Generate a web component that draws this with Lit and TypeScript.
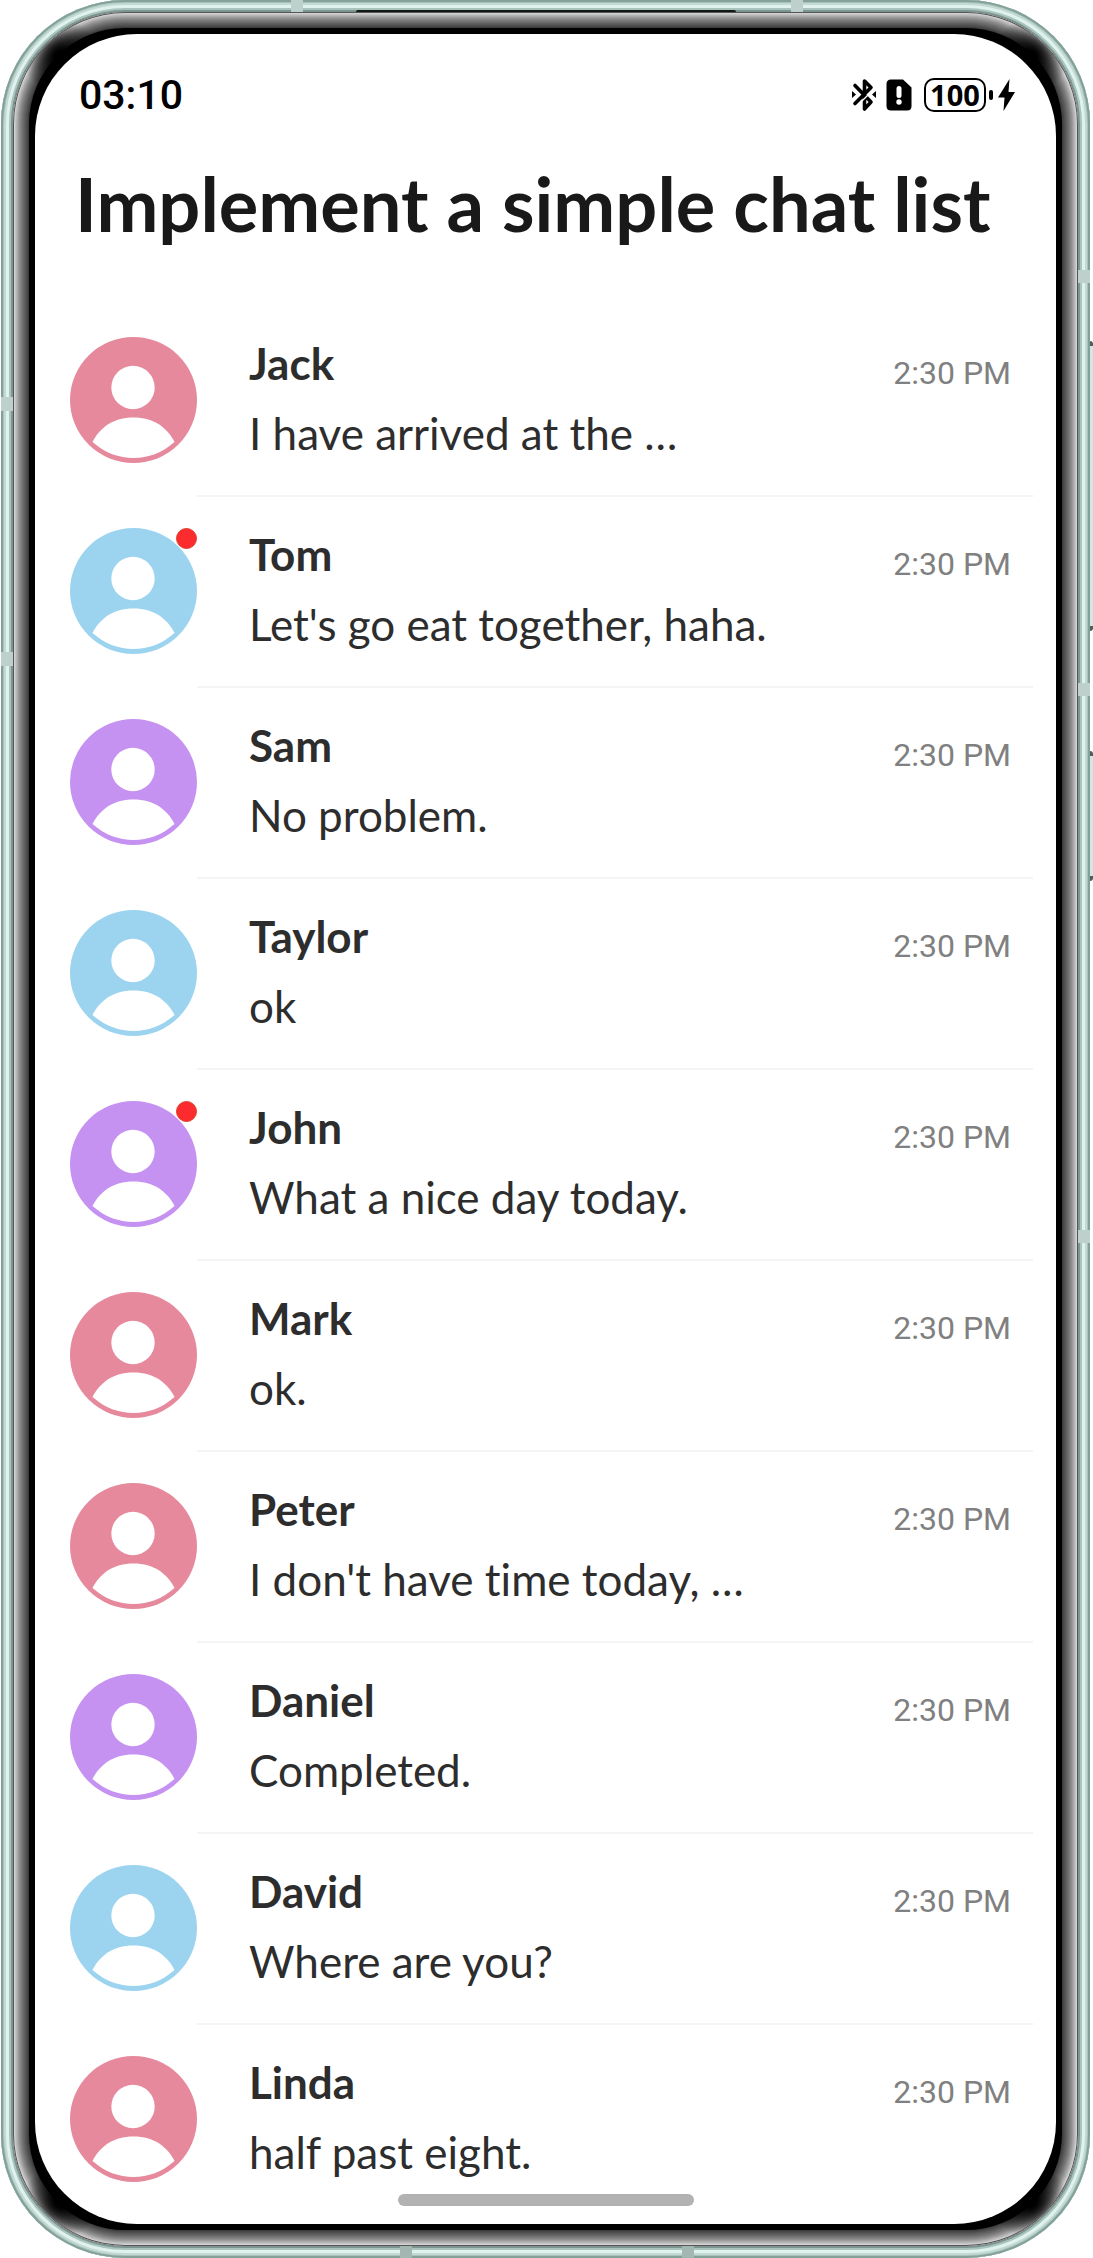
import { LitElement, html, css } from "lit";
import { customElement, property } from "lit/decorators.js";
import { classMap } from "lit/directives/class-map.js";

type Tint = "rose" | "sky" | "violet";

interface Chat {
  name: string;
  text: string;
  time: string;
  tint: Tint;
  unread?: boolean;
}

const CHATS: Chat[] = [
  { name: "Jack", text: "I have arrived at the …", time: "2:30 PM", tint: "rose" },
  { name: "Tom", text: "Let's go eat together, haha.", time: "2:30 PM", tint: "sky", unread: true },
  { name: "Sam", text: "No problem.", time: "2:30 PM", tint: "violet" },
  { name: "Taylor", text: "ok", time: "2:30 PM", tint: "sky" },
  { name: "John", text: "What a nice day today.", time: "2:30 PM", tint: "violet", unread: true },
  { name: "Mark", text: "ok.", time: "2:30 PM", tint: "rose" },
  { name: "Peter", text: "I don't have time today, …", time: "2:30 PM", tint: "rose" },
  { name: "Daniel", text: "Completed.", time: "2:30 PM", tint: "violet" },
  { name: "David", text: "Where are you?", time: "2:30 PM", tint: "sky" },
  { name: "Linda", text: "half past eight.", time: "2:30 PM", tint: "rose" },
];

@customElement("chat-avatar")
export class ChatAvatar extends LitElement {
  @property() tint: Tint = "rose";
  @property({ type: Boolean }) unread = false;

  static styles = css`
    :host { display: block; position: relative; width: 127px; height: 127px; }
    .face { display: block; width: 100%; height: 100%; }
    .rose { fill: #e6899c; }
    .sky { fill: #9cd4f0; }
    .violet { fill: #c692f1; }
    .skin { fill: #fff; }
    .dot {
      position: absolute; top: 0; right: 0; width: 21px; height: 21px;
      box-sizing: border-box; border-radius: 50%;
      background: #fc2b2d; border: 1px solid #dd3f2c;
    }
  `;

  render() {
    return html`
      <svg class="face" viewBox="0 0 127 127" aria-hidden="true">
        <ellipse class=${classMap({ [this.tint]: true })} cx="63.5" cy="63" rx="63.5" ry="63"></ellipse>
        <circle class="skin" cx="63" cy="50.500" r="21.7"></circle>
        <path class="skin" d="M22.5 105C30 90.500 43 80.500 63.500 80.500S97 90.500 104.500 105C92 116 78 121 63.500 121S35 116 22.500 105Z"></path>
      </svg>
      ${this.unread ? html`<span class="dot"></span>` : ""}
    `;
  }
}

@customElement("chat-status-bar")
export class ChatStatusBar extends LitElement {
  static styles = css`
    :host { display: flex; align-items: center; justify-content: space-between; color: #000; }
    .clock { font: 500 41px/48px "Roboto", "Noto Sans", sans-serif; }
    .icons { display: flex; align-items: center; }
    .icons svg { display: block; height: 36px; }
    .bluetooth { width: 24px; margin-right: 10px; }
    .sim { width: 26px; margin-right: 12px; }
    .level {
      box-sizing: border-box; width: 62px; height: 34px; border: 2px solid #000; border-radius: 10px;
      font: 700 29px/30px "Noto Sans", sans-serif; display: flex; justify-content: center;
    }
    .cap { width: 4px; height: 10px; border-radius: 2px; background: #000; margin: 0 5px 0 3px; }
    .bolt { width: 17px; }
  `;

  render() {
    return html`
      <time class="clock">03:10</time>
      <div class="icons">
        <svg class="bluetooth" viewBox="0 0 24 36" aria-hidden="true">
          <path d="M3 8.500L19 25L12.500 32V4L19 10.500L3 26.500" fill="none" stroke="#000" stroke-width="3.600" stroke-linejoin="round" stroke-linecap="round"></path>
          <path d="M5.500 28.500L23 11" stroke="#fff" stroke-width="1.200"></path>
          <path d="M0 14L4 17.500L0 21ZM24 14L20 17.500L24 21Z"></path>
        </svg>
        <svg class="sim" viewBox="0 0 26 36" aria-hidden="true">
          <path d="M5 2.500H17L25.500 10.500V29Q25.500 33.500 21 33.500H5Q.5 33.500 .5 29V7Q.5 2.500 5 2.500Z"></path>
          <path d="M13 11.500V18.500" stroke="#fff" stroke-width="5" stroke-linecap="round"></path>
          <circle cx="13" cy="25" r="2.700" fill="#fff"></circle>
        </svg>
        <span class="level">100</span>
        <span class="cap"></span>
        <svg class="bolt" viewBox="0 0 17 36" aria-hidden="true">
          <path d="M11.500 2L0 20.500H6.500L5.500 34L17 15H10.500Z"></path>
        </svg>
      </div>
    `;
  }
}

@customElement("app-root")
export class AppRoot extends LitElement {
  static styles = css`
    :host { display: block; background: #fff; font-family: "Lato", "Open Sans", sans-serif; }
    .device { position: relative; padding: 0 3px 0 1px; }
    .frame {
      position: relative; padding: 12px; border-radius: 124px;
      background: #a9c0ba;
      box-shadow: inset 0 0 0 2px #83a099, inset 0 0 0 3px #a9c3bc, inset 0 0 0 5px #c3dad4,
        inset 0 0 0 8px #e0f2ee, inset 0 0 0 10px #a9c3bd, inset 0 0 0 12px #7c9590;
    }
    .bezel {
      position: relative; border-radius: 112px; padding: 22px; background: #000;
      box-shadow: inset 0 0 0 1px #555, inset 0 0 0 2px #d2d2d2, inset 0 0 0 3px #c3c3c3,
        inset 0 0 0 4px #b5b5b5, inset 0 0 0 5px #a8a8a8, inset 0 0 0 6px #9b9b9b,
        inset 0 0 0 7px #8f8f8f, inset 0 0 0 8px #848484, inset 0 0 0 9px #7a7a7a,
        inset 0 0 0 10px #717171, inset 0 0 0 11px #686868, inset 0 0 0 12px #606060,
        inset 0 0 0 13px #575757, inset 0 0 0 14px #4f4f4f, inset 0 0 0 15px #474747,
        inset 0 0 0 16px #3c3c3c;
    }
    .bezel::before {
      content: ""; position: absolute; inset: 1px; border-radius: 111px;
      background:
        radial-gradient(circle at 47px 44px, #000 6px, #0000 38px),
        radial-gradient(circle at calc(100% - 47px) 44px, #000 6px, #0000 38px),
        radial-gradient(circle at 47px calc(100% - 44px), #000 6px, #0000 38px),
        radial-gradient(circle at calc(100% - 47px) calc(100% - 44px), #000 6px, #0000 38px);
    }
    .screen {
      position: relative; display: flex; flex-direction: column; background: #fff;
      border-radius: 102px; overflow: hidden;
    }
    .status { margin: 37px 41px 0 44px; }
    .title {
      margin: 37px 40px 0 40px; color: #191919; white-space: nowrap;
      font: 700 74px/96px "Lato", sans-serif;
    }
    .list { list-style: none; margin: 54px 23px 0 35px; padding: 0; }
    .row { display: grid; grid-template-columns: 127px 1fr; height: 191px; }
    .row:last-child { height: 169px; }
    .avatar { margin-top: 31px; }
    .body {
      display: flex; justify-content: space-between; align-items: flex-start;
      padding: 27px 22px 0 52px; border-bottom: 2px solid #f4f4f4; color: #2d2d2d;
    }
    .row:last-child .body { border-bottom: 0; }
    .name { margin: 0; font: 700 44px/60px "Lato", sans-serif; }
    .text {
      margin: 10px 0 0; font: 400 44px/60px "Lato", sans-serif;
      font-variant-ligatures: none;
    }
    .time { color: #808080; font: 400 32px/44px "Roboto", sans-serif; margin-top: 18px; }
    .home { width: 296px; height: 12px; border-radius: 6px; background: #b2b2b2; margin: 0 auto 18px; }

    .band { position: absolute; width: 12px; height: 12px; background: #bdd0cb; }
    .top { top: 0; }
    .bottom { bottom: 0; background: #a3b6b1; }
    .left { left: 0; height: 14px; }
    .right { right: 0; height: 13px; }
    .b1 { left: 290px; }
    .b2 { right: 287px; }
    .b3 { left: 399px; }
    .b4 { right: 396px; }
    .l1 { top: 397px; }
    .l2 { top: 652px; }
    .r1 { top: 270px; }
    .r2 { top: 683px; }
    .r3 { top: 1230px; }
    .speaker {
      position: absolute; top: 10px; left: 0; right: 0; width: 380px; height: 2px; margin: 0 auto;
      border-radius: 4px 4px 0 0; background: #111816;
    }
    .key {
      position: absolute; right: 0; width: 3px; box-sizing: border-box; background: #d3e6e1;
      border: solid #4d5f5a; border-width: 5px 0; border-radius: 0 3px 3px 0;
    }
    .volume { top: 341px; height: 290px; }
    .power { top: 751px; height: 130px; }
  `;

  render() {
    return html`
      <div class="device">
        <span class="key volume"></span>
        <span class="key power"></span>
        <div class="frame">
          ${["top b1", "top b2", "bottom b3", "bottom b4", "left l1", "left l2", "right r1", "right r2", "right r3"].map(
            (place) => html`<span class="band ${place}"></span>`,
          )}
          <span class="speaker"></span>
          <div class="bezel">
            <main class="screen">
              <chat-status-bar class="status"></chat-status-bar>
              <h1 class="title">Implement a simple chat list</h1>
              <ul class="list">
                ${CHATS.map((c) => html`
                  <li class="row">
                    <chat-avatar class="avatar" .tint=${c.tint} .unread=${!!c.unread}></chat-avatar>
                    <div class="body">
                      <div>
                        <h2 class="name">${c.name}</h2>
                        <p class="text">${c.text}</p>
                      </div>
                      <time class="time">${c.time}</time>
                    </div>
                  </li>
                `)}
              </ul>
              <div class="home"></div>
            </main>
          </div>
        </div>
      </div>
    `;
  }
}
